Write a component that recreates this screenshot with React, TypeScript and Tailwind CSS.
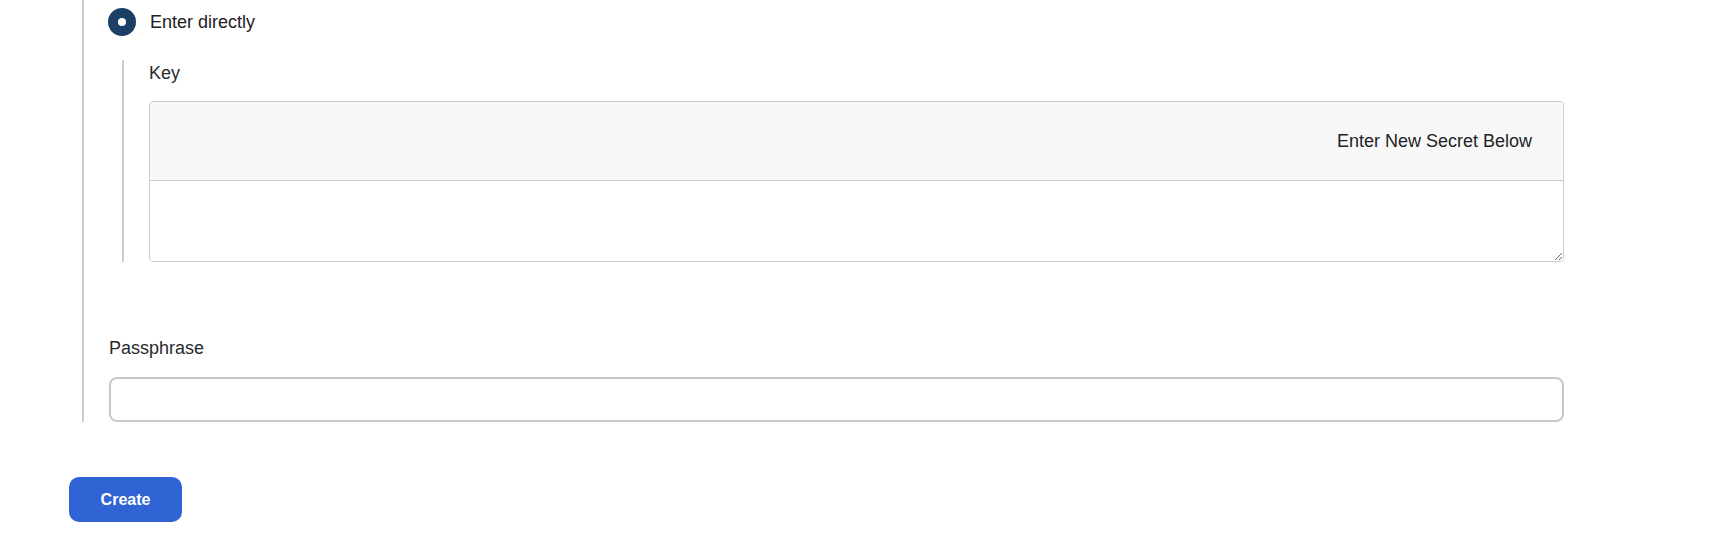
export default function App() {
  return (
    <div className="min-h-[555px] w-full bg-white font-['Liberation_Sans',Arial,sans-serif] text-[18px] leading-[27px] text-[#1f2024]">
      <div className="ml-[82px] w-[1482px] border-l-2 border-[#c9cdd2] pl-[25px] pt-2">
        <label className="-ml-px flex h-[28px] items-center gap-[14px]">
          <span className="flex h-[28px] w-[28px] items-center justify-center rounded-full bg-[#1b3f65]">
            <span className="h-[8px] w-[8px] rounded-full bg-white" />
          </span>
          <span>Enter directly</span>
        </label>

        <div className="ml-[13px] mt-[24px] border-l-2 border-[#c9cdd2] pl-[25px]">
          <div className="text-[#2a2a2e]">Key</div>
          <div className="mt-[14px] overflow-hidden rounded border border-[#c9cdd2]">
            <div className="flex h-[79px] items-center justify-end border-b border-[#c9cdd2] bg-[#f8f8f8] pr-[31px] text-[#222226]">
              Enter New Secret Below
            </div>
            <textarea className="block h-[80px] w-full resize-y bg-white px-3 py-2 outline-none" />
          </div>
        </div>

        <div className="mt-[73px]">
          <div className="text-[#2a2a2e]">Passphrase</div>
          <input
            type="password"
            className="mt-[15px] block h-[45px] w-full rounded-lg border-2 border-[#c5c9ce] bg-white px-3 outline-none"
          />
        </div>
      </div>

      <button className="ml-[69px] mt-[55px] h-[45px] w-[113px] rounded-[10px] bg-[#3063d4] text-[16px] font-bold text-white">
        Create
      </button>
    </div>
  );
}
